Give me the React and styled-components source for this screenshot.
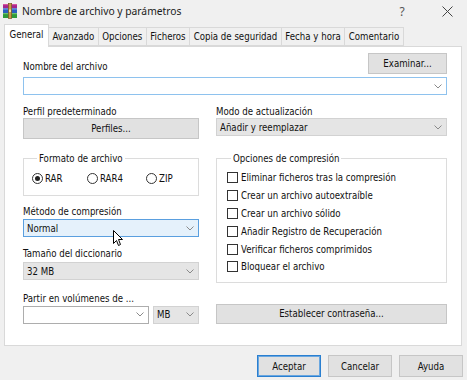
import React from "react";
import styled, { createGlobalStyle } from "styled-components";

const UI_FONT = `"DejaVu Sans Condensed", "Liberation Sans", sans-serif`;

const Global = createGlobalStyle`
  html, body { margin: 0; padding: 0; background: #f0f0f0; }
  body { width: 467px; height: 380px; overflow: hidden; font-family: ${UI_FONT}; }
  * { box-sizing: border-box; }
`;

const Window = styled.div`
  position: relative;
  width: 467px;
  height: 380px;
  background: #f0f0f0;
  display: flex;
  flex-direction: column;
  color: #111;
  font-family: ${UI_FONT};
`;

const TitleBar = styled.div`
  height: 22px;
  display: flex;
  align-items: center;
  padding-left: 2px;
`;

const Title = styled.span`
  flex: 1;
  margin-left: 4px;
  font-family: "Noto Sans", sans-serif;
  font-size: 10.3px;
  color: #1b1b1b;
`;

const CaptionButton = styled.span`
  width: 20px;
  display: flex;
  justify-content: center;
  align-items: center;
  font-family: "Noto Sans", sans-serif;
  font-size: 12px;
  color: #555;
  margin-right: ${(p) => p.$mr || 0}px;
`;

const TabStrip = styled.div`
  height: 24px;
  display: flex;
  align-items: flex-end;
  padding-left: 4px;
  position: relative;
  z-index: 1;
`;

const Tab = styled.div`
  height: ${(p) => (p.$active ? 23 : 19)}px;
  padding: 0 ${(p) => (p.$active ? 4.5 : 3.5)}px;
  margin-left: -1px;
  margin-bottom: ${(p) => (p.$active ? -1 : 0)}px;
  display: flex;
  align-items: center;
  font-size: 9.6px;
  padding-bottom: ${(p) => (p.$active ? 3 : 0)}px;
  background: ${(p) => (p.$active ? "#fff" : "#f0f0f0")};
  border: 1px solid #d9d9d9;
  border-bottom: ${(p) => (p.$active ? "none" : "1px solid #d9d9d9")};
  white-space: nowrap;
  z-index: ${(p) => (p.$active ? 2 : 1)};
  &:first-child { margin-left: 0; }
`;

const Panel = styled.div`
  margin: 0 5px 0 4px;
  height: 300px;
  background: #fff;
  border: 1px solid #d9d9d9;
  padding: 6px 14px 0 18px;
`;

const TopRow = styled.div`
  display: flex;
  justify-content: space-between;
  align-items: flex-end;
`;

const Label = styled.div`
  font-size: 9.6px;
  line-height: 13px;
  white-space: nowrap;
  margin-top: ${(p) => p.$mt || 0}px;
  margin-bottom: ${(p) => p.$mb || 0}px;
`;

const PushButton = styled.div`
  width: ${(p) => (p.$width ? `${p.$width}px` : "100%")};
  height: ${(p) => p.$height || 21}px;
  background: #e1e1e1;
  border: 1px solid ${(p) => (p.$default ? "#2a7fd0" : "#c6c6c6")};
  box-shadow: ${(p) => (p.$default ? "inset 0 0 0 1px #6aa7e0" : "none")};
  display: flex;
  align-items: center;
  justify-content: center;
  font-size: 9.6px;
  white-space: nowrap;
`;

const comboStyles = {
  edit: { bg: "#fff", border: "#adadad" },
  focus: { bg: "#fff", border: "#8ec2ee" },
  hover: { bg: "#e5f1fb", border: "#5a9fdf" },
  list: { bg: "#e5e5e5", border: "#d2d2d2" },
};

const ComboBox = styled.div`
  width: ${(p) => (p.$width ? `${p.$width}px` : "100%")};
  height: 18px;
  margin-top: ${(p) => p.$mt || 0}px;
  background: ${(p) => comboStyles[p.$variant].bg};
  border: 1px solid ${(p) => comboStyles[p.$variant].border};
  display: flex;
  align-items: center;
  padding: 0 4px 0 3px;
  font-size: 9.6px;
  white-space: nowrap;
`;

const ComboText = styled.span`
  flex: 1;
`;

const Columns = styled.div`
  display: grid;
  grid-template-columns: 176px 231px;
  column-gap: 17px;
  align-items: ${(p) => p.$align || "start"};
  margin-top: ${(p) => p.$mt || 0}px;
`;

const Column = styled.div`
  display: flex;
  flex-direction: column;
`;

const Group = styled.fieldset`
  margin: 0;
  min-width: 0;
  border: 1px solid #dcdcdc;
  padding: 0 0 ${(p) => p.$pb}px ${(p) => p.$pl}px;
`;

const Legend = styled.legend`
  font-size: 9.6px;
  line-height: 13px;
  padding: 0 2px;
  margin-left: ${(p) => p.$ml}px;
`;

const RadioRow = styled.div`
  display: grid;
  grid-template-columns: 55px 59px auto;
  margin-top: 7px;
`;

const RadioItem = styled.div`
  display: flex;
  align-items: center;
  font-size: 9.6px;
  line-height: 13px;
`;

const RadioCircle = styled.span`
  width: 11px;
  height: 11px;
  border-radius: 50%;
  border: 1px solid #333;
  margin-right: 2px;
  display: flex;
  align-items: center;
  justify-content: center;
  &::after {
    content: "";
    width: 5px;
    height: 5px;
    border-radius: 50%;
    background: ${(p) => (p.$checked ? "#222" : "transparent")};
  }
`;

const CheckList = styled.div`
  display: flex;
  flex-direction: column;
  margin-top: 4px;
`;

const CheckRow = styled.div`
  height: 17.8px;
  display: flex;
  align-items: center;
  font-size: 9.6px;
  white-space: nowrap;
`;

const CheckBox = styled.span`
  width: 11px;
  height: 11px;
  border: 1px solid #333;
  background: #fff;
  margin-right: 3px;
`;

const SplitRow = styled.div`
  display: flex;
  gap: 4px;
`;

const Footer = styled.div`
  display: flex;
  justify-content: flex-end;
  gap: 7px;
  padding: 9px 4px 0 0;
`;

const Cursor = styled.svg`
  position: absolute;
  left: 113px;
  top: 230px;
`;

const Chevron = () => (
  <svg width="8" height="5" viewBox="0 0 8 5">
    <polyline points="0.5,0.5 4,4 7.5,0.5" fill="none" stroke="#8a8a8a" strokeWidth="1" />
  </svg>
);

const Combo = ({ variant, text, width, mt }) => (
  <ComboBox $variant={variant} $width={width} $mt={mt}>
    <ComboText>{text}</ComboText>
    <Chevron />
  </ComboBox>
);

const AppIcon = () => (
  <svg width="16" height="16" viewBox="0 0 16 16">
    <rect x="1" y="1" width="14" height="4.5" fill="#a3248c" />
    <rect x="1" y="1" width="14" height="1.2" fill="#d5559f" />
    <rect x="1" y="5.5" width="14" height="4.5" fill="#2a5fbf" />
    <rect x="1" y="5.5" width="14" height="1.2" fill="#5a8ee0" />
    <rect x="1" y="10" width="14" height="5" fill="#2f9a3a" />
    <rect x="1" y="10" width="14" height="1.2" fill="#6cc16a" />
    <rect x="6.3" y="0.5" width="3.4" height="15" fill="#c89a4a" />
    <rect x="6.3" y="0.5" width="3.4" height="15" fill="none" stroke="#6b4a1a" strokeWidth="0.6" />
    <rect x="7" y="6.5" width="2" height="2.5" fill="#f4e0a0" />
  </svg>
);

const checks = [
  "Eliminar ficheros tras la compresión",
  "Crear un archivo autoextraíble",
  "Crear un archivo sólido",
  "Añadir Registro de Recuperación",
  "Verificar ficheros comprimidos",
  "Bloquear el archivo",
];

const tabs = ["General", "Avanzado", "Opciones", "Ficheros", "Copia de seguridad", "Fecha y hora", "Comentario"];

export default function App() {
  return (
    <Window>
      <Global />
      <TitleBar>
        <AppIcon />
        <Title>Nombre de archivo y parámetros</Title>
        <CaptionButton $mr={25}>?</CaptionButton>
        <CaptionButton $mr={10}>
          <svg width="11" height="11" viewBox="0 0 11 11">
            <path d="M0.5 0.5 L10.5 10.5 M10.5 0.5 L0.5 10.5" stroke="#444" strokeWidth="1" />
          </svg>
        </CaptionButton>
      </TitleBar>
      <TabStrip>
        {tabs.map((t, i) => (
          <Tab key={t} $active={i === 0}>{t}</Tab>
        ))}
      </TabStrip>
      <Panel>
        <TopRow>
          <Label $mb={1}>Nombre del archivo</Label>
          <PushButton $width={79}>Examinar...</PushButton>
        </TopRow>
        <Combo variant="focus" text="" mt={3} />
        <Columns $mt={10}>
          <Column>
            <Label>Perfil predeterminado</Label>
            <PushButton>Perfiles...</PushButton>
          </Column>
          <Column>
            <Label>Modo de actualización</Label>
            <Combo variant="list" text="Añadir y reemplazar" />
          </Column>
        </Columns>
        <Columns $mt={13}>
          <Column>
            <Group $pb={10} $pl={8}>
              <Legend $ml={5}>Formato de archivo</Legend>
              <RadioRow>
                <RadioItem><RadioCircle $checked />RAR</RadioItem>
                <RadioItem><RadioCircle />RAR4</RadioItem>
                <RadioItem><RadioCircle />ZIP</RadioItem>
              </RadioRow>
            </Group>
            <Label $mt={9}>Método de compresión</Label>
            <Combo variant="hover" text="Normal" mt={1} />
            <Label $mt={10}>Tamaño del diccionario</Label>
            <Combo variant="list" text="32 MB" mt={2} />
          </Column>
          <Column>
            <Group $pb={6} $pl={10}>
              <Legend $ml={4}>Opciones de compresión</Legend>
              <CheckList>
                {checks.map((c) => (
                  <CheckRow key={c}><CheckBox />{c}</CheckRow>
                ))}
              </CheckList>
            </Group>
          </Column>
        </Columns>
        <Columns $mt={9} $align="end">
          <Column>
            <Label $mb={1}>Partir en volúmenes de ...</Label>
            <SplitRow>
              <Combo variant="edit" text="" width={126} />
              <Combo variant="list" text="MB" width={46} />
            </SplitRow>
          </Column>
          <Column>
            <PushButton $height={20}>Establecer contraseña...</PushButton>
          </Column>
        </Columns>
      </Panel>
      <Footer>
        <PushButton $width={64} $height={22} $default>Aceptar</PushButton>
        <PushButton $width={64} $height={22}>Cancelar</PushButton>
        <PushButton $width={64} $height={22}>Ayuda</PushButton>
      </Footer>
      <Cursor width="11" height="17" viewBox="0 0 11 17">
        <path d="M0.5 0.5 L0.5 13.5 L3.5 10.5 L5.5 15.5 L7.5 14.5 L5.5 9.5 L9.5 9.5 Z" fill="#fff" stroke="#000" strokeWidth="1" strokeLinejoin="miter" />
      </Cursor>
    </Window>
  );
}
